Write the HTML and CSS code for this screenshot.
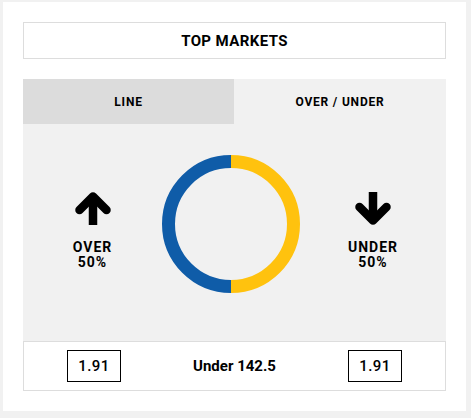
FILE: index.html
```html
<!DOCTYPE html>
<html lang="en">
<head>
    <meta charset="UTF-8">
    <meta name="viewport" content="width=device-width, initial-scale=1.0">
    <title>Top Markets</title>
    <link rel="stylesheet" href="styles.css">
</head>
<body>
    <div class="card">
        <div class="title">TOP MARKETS</div>

        <div class="tabs">
            <div class="tab active">LINE</div>
            <div class="tab">OVER / UNDER</div>
        </div>

        <div class="panel">
            <div class="side">
                <svg class="arrow" width="36" height="33" viewBox="0 0 36 33">
                    <path d="M18 33 V8" stroke="#000" stroke-width="8.5" fill="none"/>
                    <path d="M4.5 18 L18 4.5 L31.5 18" stroke="#000" stroke-width="8.5" fill="none" stroke-linecap="round" stroke-linejoin="round"/>
                </svg>
                <div class="label">OVER<br>50%</div>
            </div>
            <div class="donut">
                <svg width="138" height="138" viewBox="0 0 138 138">
                    <path d="M69 6.5 A62.5 62.5 0 0 0 69 131.5" stroke="#0f5ca8" stroke-width="13" fill="none"/>
                    <path d="M69 6.5 A62.5 62.5 0 0 1 69 131.5" stroke="#ffc20e" stroke-width="13" fill="none"/>
                </svg>
            </div>
            <div class="side">
                <svg class="arrow" width="36" height="33" viewBox="0 0 36 33">
                    <path d="M18 0 V25" stroke="#000" stroke-width="8.5" fill="none"/>
                    <path d="M4.5 15 L18 28.5 L31.5 15" stroke="#000" stroke-width="8.5" fill="none" stroke-linecap="round" stroke-linejoin="round"/>
                </svg>
                <div class="label">UNDER<br>50%</div>
            </div>
        </div>

        <div class="odds">
            <div class="price">1.91</div>
            <div class="market">Under 142.5</div>
            <div class="price">1.91</div>
        </div>
    </div>
</body>
</html>
```

FILE: styles.css
```css
body { margin: 0; padding: 2px 5px 7px 3px; background: #f1f1f1; font-family: Roboto, "Liberation Sans", sans-serif; color: #000; }
.card { background: #fff; padding: 20px 20px 20px 20px; }
.title { border: 1px solid #ddd; height: 35px; display: flex; align-items: center; justify-content: center; font-size: 15px; font-weight: 700; letter-spacing: 0.4px; margin-bottom: 20px; }
.tabs { display: flex; background: #f1f1f1; }
.tab { flex: 0 0 211px; height: 45px; display: flex; align-items: center; justify-content: center; font-size: 12px; font-weight: 700; letter-spacing: 0.8px; }
.tab + .tab { flex: 1; }
.tab.active { background: #dcdcdc; }
.panel { background: #f1f1f1; display: grid; grid-template-columns: 139px 138px 1fr; height: 217px; padding-top: 31px; box-sizing: border-box; }
.side { display: flex; flex-direction: column; align-items: center; padding-top: 37px; }
.arrow { display: block; margin-bottom: 15px; }
.label { font-size: 14px; font-weight: 700; line-height: 15px; letter-spacing: 1px; text-align: center; }
.donut svg { display: block; }
.odds { border: 1px solid #ddd; height: 48px; display: flex; align-items: center; justify-content: space-between; padding: 0 43px; }
.price { border: 1px solid #000; width: 52px; height: 30px; display: flex; align-items: center; justify-content: center; font-size: 15px; font-weight: 500; letter-spacing: 0.5px; }
.market { font-size: 15px; font-weight: 700; }
```
